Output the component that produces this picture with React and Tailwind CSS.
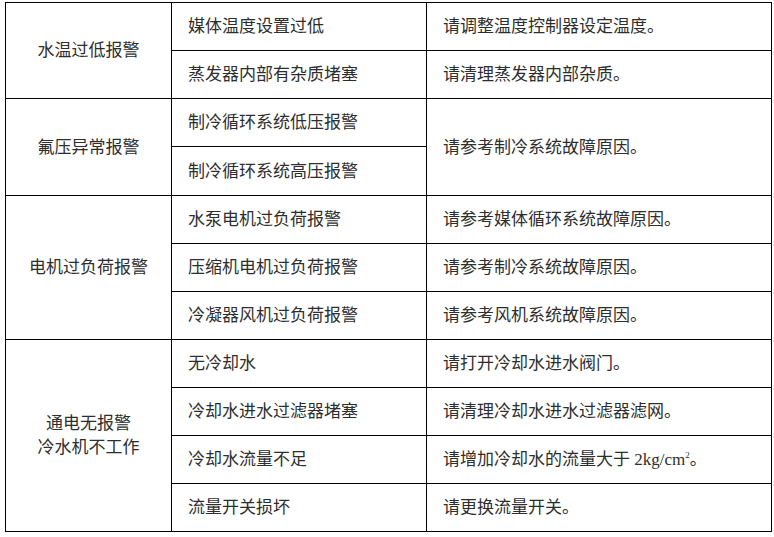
import React from "react";

const font = { fontFamily: '"Liberation Serif", "Noto Sans CJK SC", serif' };

function Cell({ children, className = "" }) {
  return (
    <div className={"bg-white flex items-center text-[17px] text-[#2e2e2e] " + className}>
      {children}
    </div>
  );
}

export default function App() {
  return (
    <div className="w-[774px] h-[537px] bg-white pt-[2px] pl-[5px]" style={font}>
      <div className="grid w-[767px] bg-black p-px gap-px grid-cols-[165px_254px_344px] grid-rows-[47px_47px_47px_48px_47px_47px_47px_47px_47px_47px_47px] leading-none">
        <Cell className="row-span-2 justify-center">水温过低报警</Cell>
        <Cell className="pl-[16px]">媒体温度设置过低</Cell>
        <Cell className="pl-[16px]">请调整温度控制器设定温度。</Cell>
        <Cell className="pl-[16px]">蒸发器内部有杂质堵塞</Cell>
        <Cell className="pl-[16px]">请清理蒸发器内部杂质。</Cell>

        <Cell className="row-span-2 justify-center">氟压异常报警</Cell>
        <Cell className="pl-[16px]">制冷循环系统低压报警</Cell>
        <Cell className="row-span-2 pl-[16px]">请参考制冷系统故障原因。</Cell>
        <Cell className="pl-[16px]">制冷循环系统高压报警</Cell>

        <Cell className="row-span-3 justify-center">电机过负荷报警</Cell>
        <Cell className="pl-[16px]">水泵电机过负荷报警</Cell>
        <Cell className="pl-[16px]">请参考媒体循环系统故障原因。</Cell>
        <Cell className="pl-[16px]">压缩机电机过负荷报警</Cell>
        <Cell className="pl-[16px]">请参考制冷系统故障原因。</Cell>
        <Cell className="pl-[16px]">冷凝器风机过负荷报警</Cell>
        <Cell className="pl-[16px]">请参考风机系统故障原因。</Cell>

        <Cell className="row-span-4 justify-center">
          <div className="flex flex-col items-center leading-[24px]">
            <span>通电无报警</span>
            <span>冷水机不工作</span>
          </div>
        </Cell>
        <Cell className="pl-[16px]">无冷却水</Cell>
        <Cell className="pl-[16px]">请打开冷却水进水阀门。</Cell>
        <Cell className="pl-[16px]">冷却水进水过滤器堵塞</Cell>
        <Cell className="pl-[16px]">请清理冷却水进水过滤器滤网。</Cell>
        <Cell className="pl-[16px]">冷却水流量不足</Cell>
        <Cell className="pl-[16px]">
          <span>
            请增加冷却水的流量大于 2kg/cm<sup className="text-[9px] relative -top-[7px]">2</sup>。
          </span>
        </Cell>
        <Cell className="pl-[16px]">流量开关损坏</Cell>
        <Cell className="pl-[16px]">请更换流量开关。</Cell>
      </div>
    </div>
  );
}
